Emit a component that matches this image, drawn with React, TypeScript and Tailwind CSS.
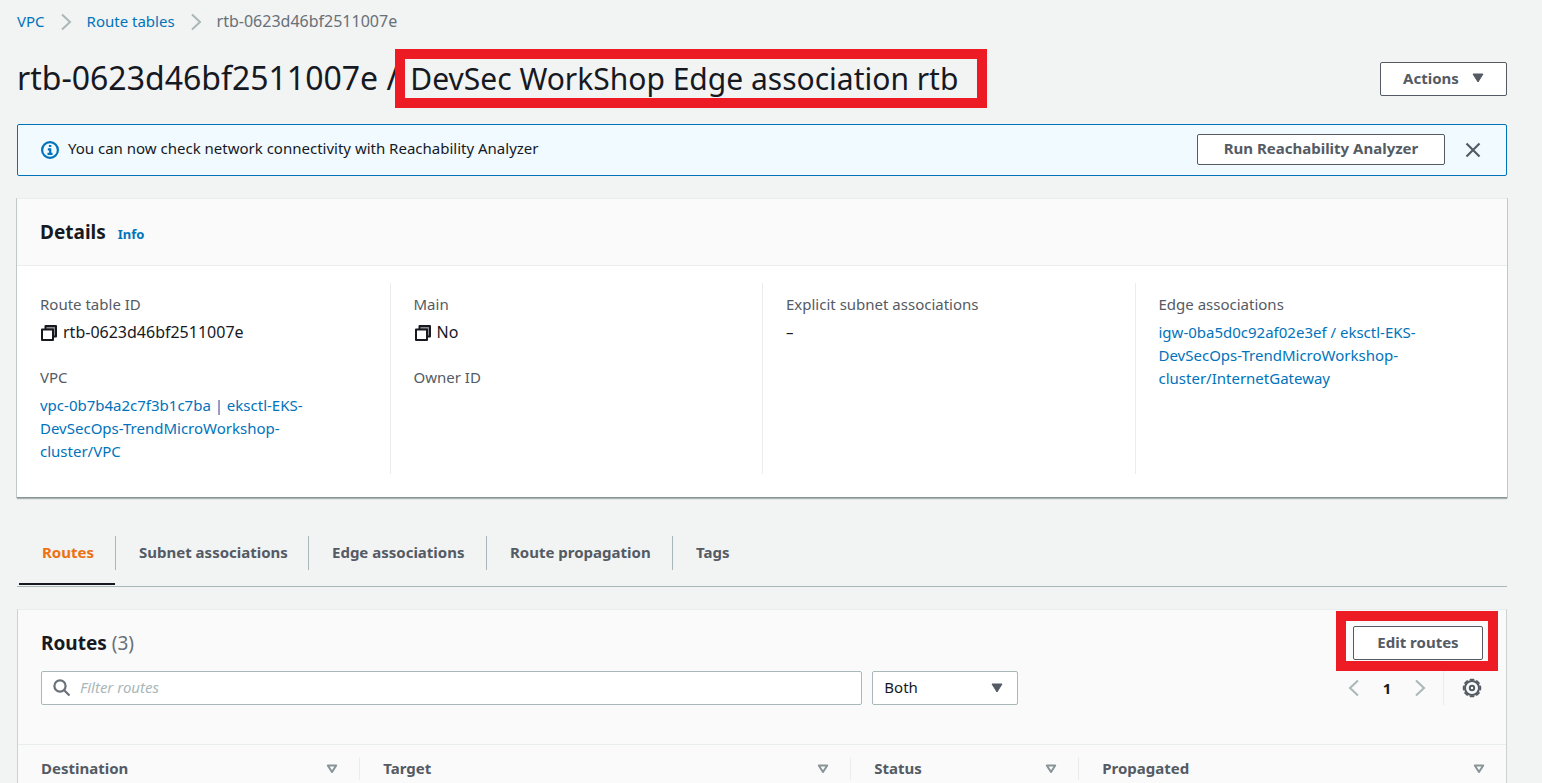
import React, { useState } from 'react';

const tabs = [
  { name: 'Routes', width: 'w-[97px]' },
  { name: 'Subnet associations', width: 'w-[193px]' },
  { name: 'Edge associations', width: 'w-[178px]' },
  { name: 'Route propagation', width: 'w-[186px]' },
  { name: 'Tags', width: 'w-[80px]' },
];

const columns = [
  { name: 'Destination', width: 'w-[23%]' },
  { name: 'Target', width: 'w-[33%]' },
  { name: 'Status', width: 'w-[228px]' },
  { name: 'Propagated', width: '' },
];

const ChevronIcon: React.FC<{ left?: boolean }> = ({ left }) => (
  <svg width="12" height="18" viewBox="0 0 12 18" fill="none" stroke="#aab7b8" strokeWidth="2" aria-hidden="true">
    <path d={left ? 'M10 1.5 2 9l8 7.5' : 'M2 1.5 10 9l-8 7.5'} />
  </svg>
);

const CopyIcon = () => (
  <svg width="18" height="18" viewBox="0 0 18 18" stroke="#16191f" strokeWidth="2" strokeLinejoin="round" aria-hidden="true">
    <path d="M5.500 2H16v10.500H5.500z" fill="#8b8c8f" />
    <path d="M2 5.500h11V16H2z" fill="#fff" />
  </svg>
);

const CaretIcon = () => (
  <svg width="12" height="10" viewBox="0 0 12 10" aria-hidden="true">
    <path d="M1 1h10L6 9z" fill="#545b64" stroke="#545b64" strokeLinejoin="round" />
  </svg>
);

const SortIcon = () => (
  <svg width="12" height="10" viewBox="0 0 12 10" fill="none" aria-hidden="true">
    <path d="M1.8 1.5h8.4L6 8z" stroke="#879596" strokeWidth="2" strokeLinejoin="round" />
  </svg>
);

const GearIcon = () => (
  <svg width="20" height="20" viewBox="0 0 20 20" fill="none" stroke="#545b64" aria-hidden="true">
    <circle cx="10" cy="10" r="7" strokeWidth="2" />
    {[0, 45, 90, 135].map((angle) => (
      <path key={angle} d="M8.500 1.700h3M8.500 18.300h3" strokeWidth="1.8" strokeLinecap="round" transform={`rotate(${angle} 10 10)`} />
    ))}
    <circle cx="10" cy="10" r="2.2" strokeWidth="2" />
  </svg>
);

const Field: React.FC<{ label: string; children?: React.ReactNode }> = ({ label, children }) => (
  <div>
    <dt className="text-[#545b64]">{label}</dt>
    <dd className="mt-[5px]">{children}</dd>
  </div>
);

const Copyable: React.FC<{ text: string }> = ({ text }) => (
  <span className="flex items-center gap-[5px] text-[16px] leading-[23px]">
    <button aria-label={`Copy ${text}`}>
      <CopyIcon />
    </button>
    {text}
  </span>
);

const buttonClass =
  'flex items-center justify-center rounded-xs border border-[#545b64] bg-white pb-[2px] font-bold text-[#545b64]';
const linkClass = 'text-[#0073bb]';

export default function App() {
  const [activeTab, setActiveTab] = useState('Routes');
  const [showFlash, setShowFlash] = useState(true);
  const [filter, setFilter] = useState('');

  return (
    <div className="h-screen overflow-hidden bg-[#f2f3f3] pl-[17px] pr-[35px] font-['Noto_Sans','Open_Sans',sans-serif] text-[15px] leading-[23px] text-[#16191f]">
      <nav aria-label="Breadcrumb" className="flex items-center gap-[15px] pt-[10px]">
        <a href="#vpc" className={linkClass}>VPC</a>
        <ChevronIcon />
        <a href="#route-tables" className={linkClass}>Route tables</a>
        <ChevronIcon />
        <span className="text-[16px] leading-[23px] text-[#687078]">rtb-0623d46bf2511007e</span>
      </nav>

      <header className="mt-[25px] flex items-center justify-between">
        <h1 className="flex items-baseline gap-3 whitespace-nowrap text-[32px] leading-[40px]">
          <span>rtb-0623d46bf2511007e /</span>
          <span className="relative text-[30px] leading-[40px]">
            DevSec WorkShop Edge association rtb
            <span className="absolute -bottom-[9px] -left-[15px] -right-[29px] -top-[10px] border-10 border-[#ed1c24]" />
          </span>
        </h1>
        <button className={`${buttonClass} mt-px h-[34px] w-[127px] gap-[13px]`}>
          Actions
          <CaretIcon />
        </button>
      </header>

      {showFlash && (
        <div className="mt-[25px] flex h-[52px] items-center rounded-xs border border-[#0073bb] bg-[#f1faff] pl-[22px] pr-[25px]">
          <svg width="20" height="20" viewBox="0 0 20 20" fill="none" stroke="#0073bb" strokeWidth="2.2" aria-hidden="true">
            <circle cx="10" cy="10" r="7.900" />
            <path d="M8.900 6h2.400M7.800 9.300h2.400v4.500M7.500 13.800h5" />
          </svg>
          <p className="ml-2 flex-1 pb-[3px]">You can now check network connectivity with Reachability Analyzer</p>
          <button className={`${buttonClass} mb-px h-[31px] w-[248px]`}>Run Reachability Analyzer</button>
          <button aria-label="Dismiss" className="ml-5" onClick={() => setShowFlash(false)}>
            <svg width="16" height="16" viewBox="0 0 16 16" fill="none" stroke="#545b64" strokeWidth="2.2" aria-hidden="true">
              <path d="m1.500 1.500 13 13m0-13-13 13" />
            </svg>
          </button>
        </div>
      )}

      <section className="mt-[22px] border-b border-t border-b-[#879596] border-t-[#eaeded] bg-white shadow-[0_1px_1px_0_rgba(0,28,36,0.3),1px_0_0_0_#ccd2d2,-1px_0_0_0_#ccd2d2]">
        <div className="flex h-[67px] items-center gap-3 border-b border-[#eaeded] bg-[#fafafa] px-[23px]">
          <h2 className="text-[19px] font-bold">Details</h2>
          <a href="#info" className={`${linkClass} mt-1 text-[13px] font-bold`}>Info</a>
        </div>
        <div className="grid grid-cols-4 pb-[23px] pt-[17px]">
          <dl className="flex flex-col gap-[22px] px-[23px] pb-[11px] pt-[10px]">
            <Field label="Route table ID">
              <Copyable text="rtb-0623d46bf2511007e" />
            </Field>
            <Field label="VPC">
              <a href="#vpc-detail" className={linkClass}>
                vpc-0b7b4a2c7f3b1c7ba | eksctl-EKS-<br />DevSecOps-TrendMicroWorkshop-<br />cluster/VPC
              </a>
            </Field>
          </dl>
          <dl className="flex flex-col gap-[22px] border-l border-[#eaeded] px-[23px] pt-[10px]">
            <Field label="Main">
              <Copyable text="No" />
            </Field>
            <Field label="Owner ID" />
          </dl>
          <dl className="border-l border-[#eaeded] px-[23px] pt-[10px]">
            <Field label="Explicit subnet associations">–</Field>
          </dl>
          <dl className="border-l border-[#eaeded] px-[23px] pt-[10px]">
            <Field label="Edge associations">
              <a href="#gateway" className={linkClass}>
                igw-0ba5d0c92af02e3ef / eksctl-EKS-<br />DevSecOps-TrendMicroWorkshop-<br />cluster/InternetGateway
              </a>
            </Field>
          </dl>
        </div>
      </section>

      <div role="tablist" className="mt-[21px] flex border-b border-[#aab7b8] pb-px pl-[2px]">
        {tabs.map((tab, index) => (
          <button
            key={tab.name}
            role="tab"
            aria-selected={activeTab === tab.name}
            onClick={() => setActiveTab(tab.name)}
            className={`${tab.width} flex flex-col whitespace-nowrap pt-[17px] text-left font-bold ${
              activeTab === tab.name ? 'text-[#ec7211]' : 'text-[#545b64]'
            }`}
          >
            <span
              className={`flex h-[34px] w-full items-center pb-[2px] pl-[23px] ${
                index < tabs.length - 1 ? 'border-r border-[#aab7b8]' : ''
              }`}
            >
              {tab.name}
            </span>
            <span className={`mt-[13px] mr-px h-[2px] self-stretch ${activeTab === tab.name ? 'bg-[#16191f]' : ''}`} />
          </button>
        ))}
      </div>

      <section className="mt-[22px] border border-x-[#ccd2d2] border-t-[#eaeded] bg-[#fafafa]">
        <div className="flex items-center justify-between pl-[23px] pr-[23px] pt-4">
          <h2 className="text-[19px] font-bold">
            Routes <span className="font-normal text-[#687078]">(3)</span>
          </h2>
          <div className="relative">
            <button className={`${buttonClass} h-[34px] w-[130px]`}>Edit routes</button>
            <span className="pointer-events-none absolute -bottom-[11px] -left-[17px] -right-[15px] -top-[15px] border-10 border-[#ed1c24]" />
          </div>
        </div>

        <div className="mt-[11px] flex items-center pl-[23px] pr-[24px]">
          <label className="flex h-[34px] w-[57%] items-center rounded-xs border border-[#aab7b8] bg-white pl-[11px]">
            <svg width="18" height="18" viewBox="0 0 18 18" fill="none" stroke="#687078" strokeWidth="2.2" aria-label="Search">
              <circle cx="7" cy="7" r="5.600" />
              <path d="m11 11 5.500 5.500" />
            </svg>
            <input
              aria-label="Filter routes"
              placeholder="Filter routes"
              value={filter}
              onChange={(e) => setFilter(e.target.value)}
              className="ml-[9px] flex-1 pb-[2px] outline-none placeholder:italic placeholder:text-[#aab7b8]"
            />
          </label>
          <div className="relative ml-[10px]">
            <select
              aria-label="Route type"
              defaultValue="Both"
              className="h-[34px] w-[146px] appearance-none rounded-xs border border-[#aab7b8] bg-white pb-[2px] pl-[11px]"
            >
              <option>Both</option>
              <option>Propagated</option>
              <option>Static</option>
            </select>
            <span className="pointer-events-none absolute right-[15px] top-3">
              <CaretIcon />
            </span>
          </div>
          <div className="ml-auto flex h-[34px] items-center">
            <button aria-label="Previous page">
              <ChevronIcon left />
            </button>
            <button className="w-[54px] font-bold">1</button>
            <button aria-label="Next page">
              <ChevronIcon />
            </button>
            <span className="ml-[17px] mr-[18px] h-full border-l border-[#eaeded]" />
            <button aria-label="Preferences">
              <GearIcon />
            </button>
          </div>
        </div>

        <table className="mt-[39px] w-full table-fixed border-t border-[#eaeded] text-left text-[#545b64]">
          <thead>
            <tr>
              {columns.map((column, index) => (
                <th key={column.name} scope="col" className={`${column.width} py-3 font-bold`}>
                  <div
                    className={`flex items-center justify-between pl-[23px] pr-[21px] ${
                      index < columns.length - 1 ? 'border-r border-[#eaeded]' : ''
                    }`}
                  >
                    {column.name}
                    <button aria-label={`Sort by ${column.name}`}>
                      <SortIcon />
                    </button>
                  </div>
                </th>
              ))}
            </tr>
          </thead>
        </table>
      </section>
    </div>
  );
}
